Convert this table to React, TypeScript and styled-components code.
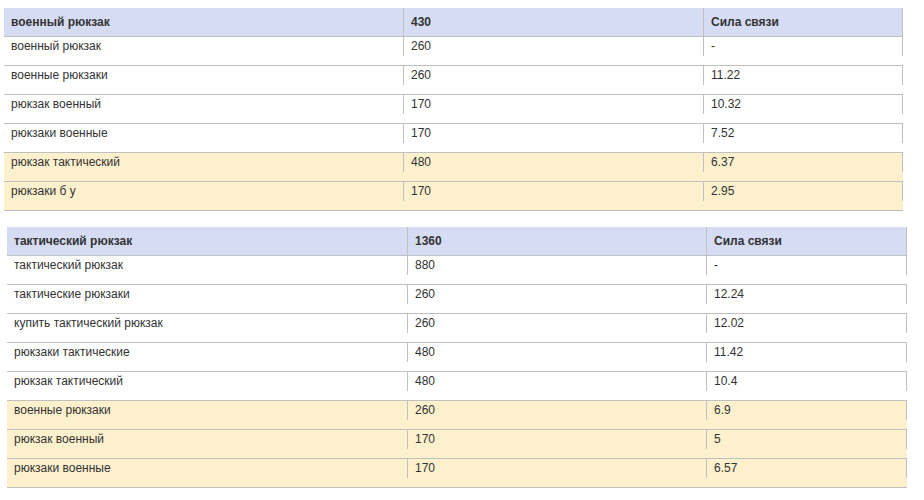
import React from "react";
import styled, { createGlobalStyle } from "styled-components";

const Global = createGlobalStyle`
  html, body { margin: 0; padding: 0; background: #ffffff; }
  body { font-family: "Liberation Sans", Arial, sans-serif; color: #333333; }
`;

const Page = styled.div`
  display: flex;
  flex-direction: column;
  gap: 16px;
  padding-top: 8px;
`;

const Table = styled.div<{ $offset: number }>`
  display: flex;
  flex-direction: column;
  margin-left: ${(p) => p.$offset}px;
  width: fit-content;
`;

const Row = styled.div<{ $cols: string; $head?: boolean; $hl?: boolean }>`
  display: grid;
  grid-template-columns: ${(p) => p.$cols};
  height: 28px;
  border-bottom: 1px solid #c0c0c0;
  background: ${(p) => (p.$head ? "#d6dcf3" : p.$hl ? "#fdf0cd" : "#ffffff")};
  align-items: start;
`;

const Cell = styled.div<{ $head?: boolean; $divider?: boolean; $last?: boolean }>`
  box-sizing: border-box;
  height: ${(p) => (p.$head ? "28px" : "19px")};
  padding: ${(p) => (p.$head ? "0 7px" : "1px 7px 0")};
  line-height: ${(p) => (p.$head ? "28px" : "16px")};
  font-size: 12px;
  font-weight: ${(p) => (p.$head ? 700 : 400)};
  color: #333333;
  white-space: nowrap;
  border-left: ${(p) => (p.$divider ? "1px solid #c0c0c0" : "none")};
  border-right: ${(p) => (p.$last ? "1px solid #c0c0c0" : "none")};
`;

type Item = [string, string, string, boolean?];

const table1: Item[] = [
  ["военный рюкзак", "260", "-"],
  ["военные рюкзаки", "260", "11.22"],
  ["рюкзак военный", "170", "10.32"],
  ["рюкзаки военные", "170", "7.52"],
  ["рюкзак тактический", "480", "6.37", true],
  ["рюкзаки б у", "170", "2.95", true],
];

const table2: Item[] = [
  ["тактический рюкзак", "880", "-"],
  ["тактические рюкзаки", "260", "12.24"],
  ["купить тактический рюкзак", "260", "12.02"],
  ["рюкзаки тактические", "480", "11.42"],
  ["рюкзак тактический", "480", "10.4"],
  ["военные рюкзаки", "260", "6.9", true],
  ["рюкзак военный", "170", "5", true],
  ["рюкзаки военные", "170", "6.57", true],
];

function KeyTable({
  offset,
  cols,
  head,
  rows,
}: {
  offset: number;
  cols: string;
  head: [string, string, string];
  rows: Item[];
}) {
  return (
    <Table $offset={offset}>
      <Row $cols={cols} $head>
        <Cell $head>{head[0]}</Cell>
        <Cell $head $divider>{head[1]}</Cell>
        <Cell $head $divider $last>{head[2]}</Cell>
      </Row>
      {rows.map((r, i) => (
        <Row key={i} $cols={cols} $hl={r[3]}>
          <Cell>{r[0]}</Cell>
          <Cell $divider>{r[1]}</Cell>
          <Cell $divider $last>{r[2]}</Cell>
        </Row>
      ))}
    </Table>
  );
}

export default function App() {
  return (
    <>
      <Global />
      <Page>
        <KeyTable
          offset={4}
          cols="399px 300px 200px"
          head={["военный рюкзак", "430", "Сила связи"]}
          rows={table1}
        />
        <KeyTable
          offset={7}
          cols="400px 299px 201px"
          head={["тактический рюкзак", "1360", "Сила связи"]}
          rows={table2}
        />
      </Page>
    </>
  );
}
